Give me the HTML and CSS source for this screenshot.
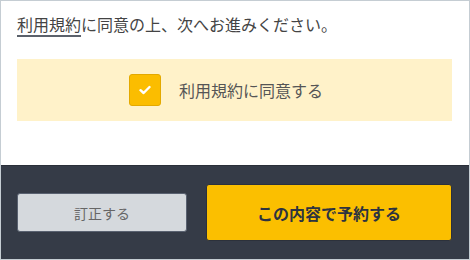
FILE: index.html
```html
<!DOCTYPE html>
<html lang="ja">
<head>
<meta charset="utf-8">
<link rel="stylesheet" href="styles.css">
</head>
<body>
<div class="frame">
  <section class="content">
    <p class="lead"><a class="terms" href="#">利用規約</a>に同意の上、次へお進みください。</p>
    <div class="agree-box">
      <label class="agree">
        <span class="checkbox">
          <svg width="12" height="10" viewBox="0 0 12 10"><path d="M1.5 5.2 L4.6 8 L10.5 2" fill="none" stroke="#fff" stroke-width="2.4" stroke-linecap="round" stroke-linejoin="round"/></svg>
        </span>
        <span class="agree-text">利用規約に同意する</span>
      </label>
    </div>
  </section>
  <footer class="actions">
    <button class="btn btn-back">訂正する</button>
    <button class="btn btn-submit">この内容で予約する</button>
  </footer>
</div>
</body>
</html>
```

FILE: styles.css
```css
html, body {
  margin: 0;
  padding: 0;
}
body {
  font-family: "Noto Sans CJK JP", "Noto Sans", sans-serif;
  background: #fff;
}
.frame {
  width: 470px;
  height: 260px;
  box-sizing: border-box;
  border: 1px solid #c5cdd3;
  display: flex;
  flex-direction: column;
}
.content {
  height: 164px;
  box-sizing: border-box;
  padding: 11px 17px 0 16px;
  background: #fff;
}
.lead {
  margin: 0;
  font-size: 16px;
  line-height: 24px;
  color: #444;
}
.terms {
  color: #444;
  text-decoration: underline;
  text-decoration-color: #5b616b;
  text-decoration-thickness: 2px;
  text-underline-offset: 4px;
}
.agree-box {
  margin-top: 23px;
  height: 62px;
  background: #fff2c9;
  display: flex;
  align-items: center;
  justify-content: center;
}
.agree {
  display: flex;
  align-items: center;
  gap: 18px;
  padding-right: 17px;
}
.checkbox {
  width: 30px;
  height: 30px;
  background: #fbbd00;
  border: 1px solid #e3a900;
  border-radius: 3px;
  display: flex;
  align-items: center;
  justify-content: center;
}
.agree-text {
  font-size: 16px;
  line-height: 24px;
  color: #555;
}
.actions {
  flex: 1;
  background: #353b47;
  border-top: 1px solid #2a2f39;
  display: flex;
  align-items: center;
  gap: 19px;
  padding: 0 17px 0 16px;
}
.btn {
  font-family: "Noto Sans CJK JP", "Noto Sans", sans-serif;
  box-sizing: border-box;
  border-radius: 3px;
  cursor: pointer;
  padding: 0;
}
.btn-back {
  width: 170px;
  height: 39px;
  background: #d5d9dd;
  border: 1px solid #596170;
  color: #666;
  font-size: 14px;
}
.btn-submit {
  flex: 1;
  height: 57px;
  background: #fbbf00;
  border: 1px solid #2c313b;
  color: #2d3340;
  font-size: 16px;
  font-weight: bold;
}
```
